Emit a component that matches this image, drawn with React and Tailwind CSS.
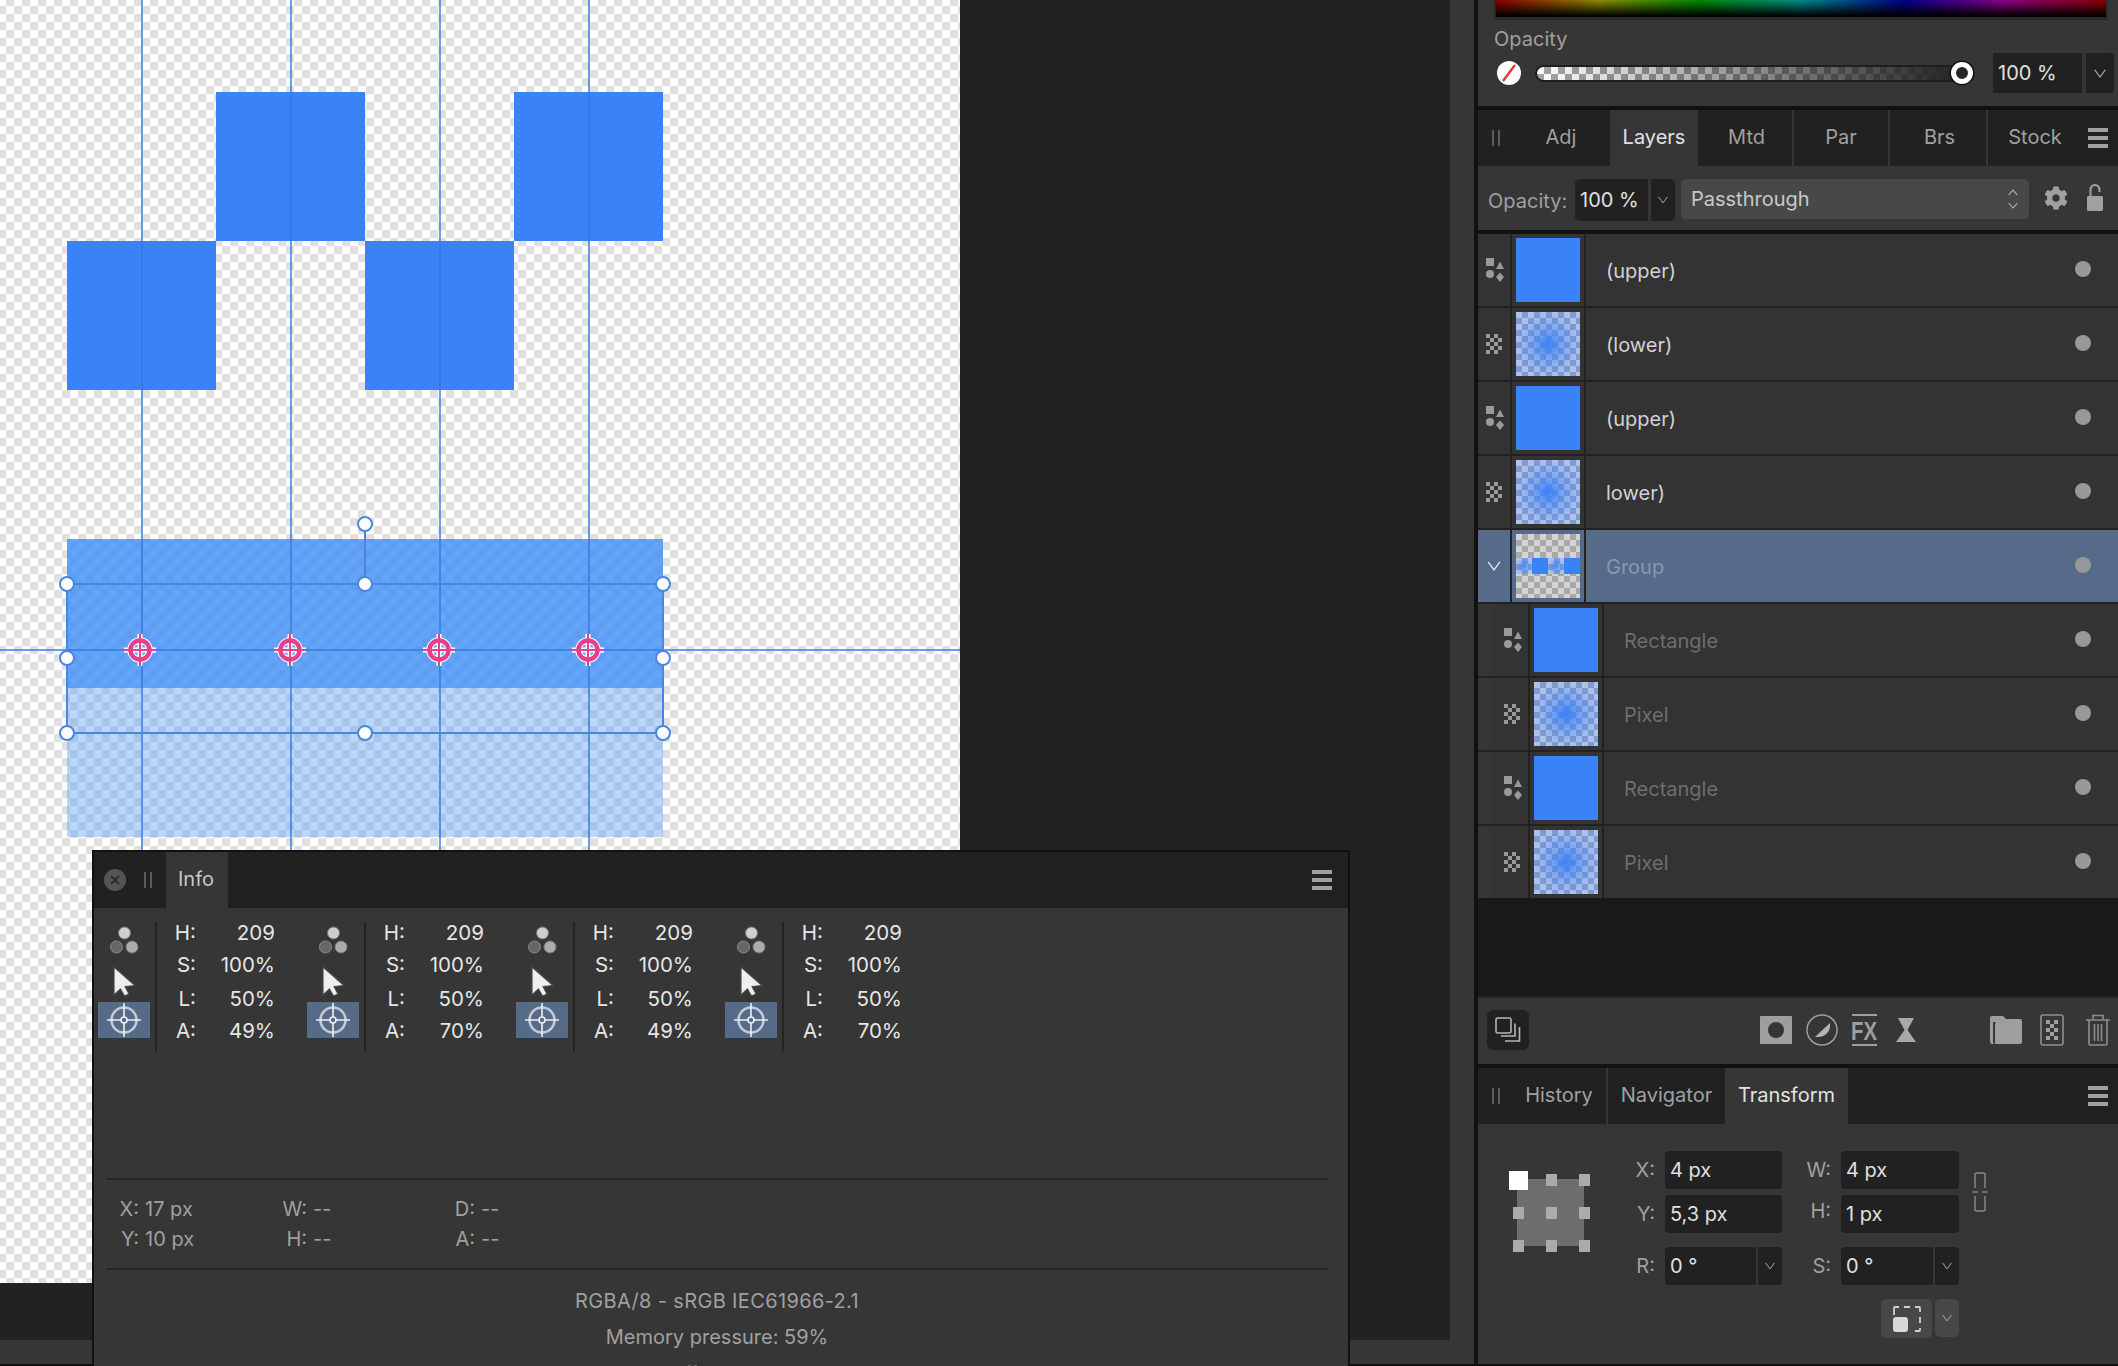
import React from "react";
import { FaCog } from "react-icons/fa";

const CHECK = "bg-[conic-gradient(#e0e0e0_25%,#ffffff_0_50%,#e0e0e0_0_75%,#ffffff_0)] bg-[length:16px_16px] bg-[position:-2px_-2px]";
const PIXEL_THUMB = "bg-[radial-gradient(circle,#3b82f6_0%,rgba(59,130,246,0.4)_35%,rgba(59,130,246,0)_72%),conic-gradient(#7f9bd3_25%,#b0c2e8_0_50%,#7f9bd3_0_75%,#b0c2e8_0)] bg-[length:100%_100%,12px_12px]";

const Chevron = ({ color = "#a8a8a8", w = 12, h = 9 }) => (
  <svg width={w} height={h} viewBox="0 0 12 9" fill="none" stroke={color} strokeWidth="1.2"><path d="M0.7 0.8 L6 8 L11.3 0.8" /></svg>
);

const Burger = () => (
  <div className="flex flex-col gap-[4px] w-[20px]">
    <div className="h-[4px] bg-[#a0a0a0]" />
    <div className="h-[4px] bg-[#a0a0a0]" />
    <div className="h-[4px] bg-[#a0a0a0]" />
  </div>
);

const Grip = () => (
  <div className="flex gap-[4px]">
    <div className="w-[2px] h-[16px] bg-[#5a5a5a]" />
    <div className="w-[2px] h-[16px] bg-[#5a5a5a]" />
  </div>
);

const Handle = ({ x, y }) => (
  <div className={`absolute w-[16px] h-[16px] rounded-full bg-white border-2 border-[#4a86e0] -translate-x-1/2 -translate-y-1/2 ${x} ${y}`} />
);

const Target = ({ x }) => (
  <svg className={`absolute top-[633px] ${x}`} width="34" height="34" viewBox="0 0 34 34" fill="none">
    <circle cx="17" cy="17" r="9.5" stroke="#fff" strokeWidth="6.5" />
    <path d="M17 1V33M1 17H33" stroke="#fff" strokeWidth="5" />
    <circle cx="17" cy="17" r="9.5" stroke="#e83e8c" strokeWidth="4.5" />
    <path d="M17 1V33M1 17H33" stroke="#e83e8c" strokeWidth="2" />
  </svg>
);

const Canvas = () => (
  <div className={`relative w-[960px] h-[1283px] ${CHECK}`}>
    <div className="absolute left-[216px] top-[92px] w-[149px] h-[149px] bg-[#3a82f7]" />
    <div className="absolute left-[514px] top-[92px] w-[149px] h-[149px] bg-[#3a82f7]" />
    <div className="absolute left-[67px] top-[241px] w-[149px] h-[149px] bg-[#3a82f7]" />
    <div className="absolute left-[365px] top-[241px] w-[149px] h-[149px] bg-[#3a82f7]" />
    <div className="absolute left-[67px] top-[539px] w-[596px] h-[149px] bg-[rgba(60,140,246,0.8)]" />
    <div className="absolute left-[67px] top-[688px] w-[596px] h-[149px] bg-[rgba(88,157,245,0.42)]" />

    <div className="absolute left-[141px] top-0 w-[2px] h-[850px] bg-[rgba(50,120,225,0.72)]" />
    <div className="absolute left-[290px] top-0 w-[2px] h-[850px] bg-[rgba(50,120,225,0.72)]" />
    <div className="absolute left-[439px] top-0 w-[2px] h-[850px] bg-[rgba(50,120,225,0.72)]" />
    <div className="absolute left-[588px] top-0 w-[2px] h-[850px] bg-[rgba(50,120,225,0.72)]" />
    <div className="absolute left-0 top-[649px] w-[960px] h-[2px] bg-[rgba(50,120,225,0.72)]" />

    <Target x="left-[123px]" />
    <Target x="left-[273px]" />
    <Target x="left-[422px]" />
    <Target x="left-[571px]" />

    <div className="absolute left-[66px] top-[583px] w-[598px] h-[151px] border-2 border-[#4a86e0]" />
    <div className="absolute left-[364px] top-[524px] w-[2px] h-[60px] bg-[#4a86e0]" />
    <Handle x="left-[365px]" y="top-[524px]" />
    <Handle x="left-[67px]" y="top-[584px]" />
    <Handle x="left-[365px]" y="top-[584px]" />
    <Handle x="left-[663px]" y="top-[584px]" />
    <Handle x="left-[67px]" y="top-[658px]" />
    <Handle x="left-[663px]" y="top-[658px]" />
    <Handle x="left-[67px]" y="top-[733px]" />
    <Handle x="left-[365px]" y="top-[733px]" />
    <Handle x="left-[663px]" y="top-[733px]" />
  </div>
);

const ThreeDots = () => (
  <svg width="30" height="28" viewBox="0 0 30 28">
    <circle cx="15.5" cy="7" r="6" fill="#cfcfcf" stroke="#7a7a7a" strokeWidth="1" />
    <circle cx="7.5" cy="21" r="6" fill="#666" stroke="#8a8a8a" strokeWidth="1" />
    <circle cx="23" cy="21" r="6" fill="#acacac" stroke="#7a7a7a" strokeWidth="1" />
  </svg>
);

const Arrow = () => (
  <svg width="24" height="31" viewBox="0 0 24 31">
    <path d="M1 1V29L7.5 23L11.5 30L16 28L12 20.5L22 19.5Z" fill="#efefef" stroke="#4a4a4a" strokeWidth="1.2" strokeLinejoin="round" />
  </svg>
);

const Crosshair = () => (
  <svg width="34" height="34" viewBox="0 0 34 34" fill="none">
    <circle cx="17" cy="17" r="12.5" stroke="#c3cad4" strokeWidth="2.6" />
    <path d="M17 0V14M17 20V34M0 17H14M20 17H34" stroke="#f0f0f0" strokeWidth="1.6" />
    <circle cx="17" cy="17" r="3" stroke="#f0f0f0" strokeWidth="1.6" />
  </svg>
);

const InfoColumn = ({ a }) => (
  <div className="flex w-[209px] shrink-0 h-[130px]">
    <div className="w-[52px] flex flex-col items-center">
      <div className="h-[44px] pt-[4px]"><ThreeDots /></div>
      <div className="h-[36px] flex items-start pl-[2px]"><Arrow /></div>
      <div className="w-[52px] h-[36px] bg-[#566b8a] flex items-center justify-center"><Crosshair /></div>
    </div>
    <div className="ml-[5px] w-[2px] h-[130px] bg-[#242424]" />
    <div className="grid grid-cols-[39px_79px] gap-y-[10px] h-fit text-[20.5px] leading-[22px] text-[#e6e6e6]">
      <span className="text-right">H:</span><span className="text-right">209</span>
      <span className="text-right">S:</span><span className="text-right">100%</span>
      <span className="text-right mt-[2px]">L:</span><span className="text-right mt-[2px]">50%</span>
      <span className="text-right">A:</span><span className="text-right">{a}</span>
    </div>
  </div>
);

const Measure = ({ rows }) => (
  <div className="flex flex-col">
    {rows.map(([l, v], i) => (
      <div key={i} className="flex h-[30px] items-center">
        <span className="w-[33px] text-right">{l}</span>
        <span className="ml-[6px] w-[129px]">{v}</span>
      </div>
    ))}
  </div>
);

const InfoPanel = () => (
  <div className="absolute left-[92px] top-[850px] w-[1258px] h-[516px] border-x-2 border-t-2 border-[#111] bg-[#363636] overflow-hidden">
    <div className="h-[56px] bg-[#212121] flex items-center">
      <div className="ml-[10px] w-[22px] h-[22px] rounded-full bg-[#555] flex items-center justify-center">
        <svg width="12" height="12" viewBox="0 0 12 12" stroke="#2a2a2a" strokeWidth="2"><path d="M2 2L10 10M10 2L2 10" /></svg>
      </div>
      <div className="ml-[18px]"><Grip /></div>
      <div className="ml-[14px] w-[62px] h-full bg-[#363636] flex items-center justify-center pb-[2px] pr-[2px] text-[#c8c8c8] text-[20px]">Info</div>
      <div className="ml-auto mr-[16px]"><Burger /></div>
    </div>
    <div className="pt-[14px] pl-[4px] flex">
      <InfoColumn a="49%" />
      <InfoColumn a="70%" />
      <InfoColumn a="49%" />
      <InfoColumn a="70%" />
    </div>
    <div className="ml-[12px] mr-[20px] mt-[126px] text-[20px] text-[#a0a0a0]">
      <div className="h-[2px] bg-[#272727]" />
      <div className="flex pt-[14px] h-[88px]">
        <Measure rows={[["X:", "17 px"], ["Y:", "10 px"]]} />
        <Measure rows={[["W:", "--"], ["H:", "--"]]} />
        <Measure rows={[["D:", "--"], ["A:", "--"]]} />
      </div>
      <div className="h-[2px] bg-[#272727]" />
      <div className="text-center pt-[13px]">
        <div className="leading-[36px] tracking-[0.35px]">RGBA/8 - sRGB IEC61966-2.1</div>
        <div className="leading-[37px]">Memory pressure: 59%</div>
        <div className="leading-[37px]">Memory efficiency: 100.0%</div>
      </div>
    </div>
  </div>
);

const TabBar = ({ tabs, active }) => (
  <div className="h-[56px] bg-[#212121] flex items-stretch relative shrink-0 text-[20px] text-[#a0a0a0]">
    <div className="pl-[14px] flex items-center"><Grip /></div>
    {tabs.map(([t, w], i) => (
      <div
        key={t}
        className={`flex items-center justify-center pb-[2px] ${w} ${i === 0 ? "pl-[12px]" : ""} ${t === active ? "bg-[#363636] text-[#e2e2e2]" : i < tabs.length - 1 && tabs[i + 1][0] !== active ? "border-r-2 border-[#363636]" : ""}`}
      >
        {t}
      </div>
    ))}
    <div className="ml-auto mr-[10px] flex items-center"><Burger /></div>
  </div>
);

const ShapeIcon = () => (
  <svg width="18" height="24" viewBox="0 0 18 24" fill="#9a9a9a">
    <rect x="0" y="0" width="8" height="8" />
    <path d="M14 3.5L18 11H10Z" />
    <circle cx="4" cy="16" r="4" />
    <path d="M14 14.5L18 19L14 24L10 19Z" />
  </svg>
);

const PixelIcon = () => (
  <svg width="16" height="20" viewBox="0 0 16 20" fill="#9a9a9a">
    <rect x="0" y="0" width="4" height="4" /><rect x="8" y="0" width="4" height="4" />
    <rect x="4" y="4" width="4" height="4" /><rect x="12" y="4" width="4" height="4" />
    <rect x="0" y="8" width="4" height="4" /><rect x="8" y="8" width="4" height="4" />
    <rect x="4" y="12" width="4" height="4" /><rect x="12" y="12" width="4" height="4" />
    <rect x="0" y="16" width="4" height="4" /><rect x="8" y="16" width="4" height="4" />
  </svg>
);

const Dot = () => <div className="ml-auto mr-[27px] mb-[3px] w-[16px] h-[16px] rounded-full bg-[#989898]" />;

const LayerRow = ({ kind, name, text, child }) => (
  <div className="h-[72px] bg-[#333] flex items-stretch">
    {child && <div className="w-[16px] bg-[#363636] mr-[2px]" />}
    <div className="flex items-center w-[32px] pl-[8px]">
      {kind === "shape" ? <ShapeIcon /> : <PixelIcon />}
    </div>
    <div className="w-[2px] bg-[#222]" />
    <div className="w-[72px] flex items-center justify-center">
      {kind === "shape" ? (
        <div className="w-[64px] h-[64px] bg-[#3a82f7]" />
      ) : (
        <div className={`w-[64px] h-[64px] ${PIXEL_THUMB}`} />
      )}
    </div>
    <div className="w-[2px] bg-[#222]" />
    <div className={`flex items-center flex-1 text-[20px] pl-[20px] ${text}`}>
      <span className="pt-[2px]">{name}</span>
      <Dot />
    </div>
  </div>
);

const GroupRow = () => (
  <div className="h-[72px] bg-[#566b8a] flex items-stretch">
    <div className="w-[32px] flex items-center justify-center"><Chevron color="#e8e8e8" w={14} h={10} /></div>
    <div className="w-[2px] bg-[#222]" />
    <div className="w-[72px] flex items-center justify-center">
      <div className="w-[64px] h-[64px] flex items-center bg-[conic-gradient(#a8a8a8_25%,#d4d4d4_0_50%,#a8a8a8_0_75%,#d4d4d4_0)] bg-[length:12px_12px]">
        <div className={`w-[16px] h-[16px] ${PIXEL_THUMB}`} />
        <div className="w-[16px] h-[16px] bg-[#3a82f7]" />
        <div className={`w-[16px] h-[16px] ${PIXEL_THUMB}`} />
        <div className="w-[16px] h-[16px] bg-[#3a82f7]" />
      </div>
    </div>
    <div className="w-[2px] bg-[#222]" />
    <div className="flex items-center flex-1 text-[20px] pl-[20px] text-[#8b98aa]">
      <span className="pt-[2px]">Group</span>
      <Dot />
    </div>
  </div>
);

const OpacitySection = () => (
  <div className="h-[106px] bg-[#363636] pl-[16px] shrink-0">
    <div className="h-[20px] w-[614px] bg-[#2a2a2a] px-[2px]">
      <div className="h-[17px] bg-[linear-gradient(to_bottom,rgba(0,0,0,0.45),#000_95%),linear-gradient(to_right,#f00,#ff0_17%,#0f0_33%,#0ff_50%,#00f_67%,#f0f_83%,#f00)]" />
    </div>
    <div className="h-[33px] pt-[5px] leading-[28px] text-[20px] text-[#a0a0a0]">Opacity</div>
    <div className="flex items-center h-[40px]">
      <svg className="ml-[3px] shrink-0" width="24" height="24" viewBox="0 0 24 24">
        <circle cx="12" cy="12" r="12" fill="#fff" />
        <path d="M6 20L18 4" stroke="#e03a30" strokeWidth="2.4" />
      </svg>
      <div className="relative ml-[14px] w-[437px] h-[17px] shrink-0 rounded-full bg-[#1e1e1e] p-[2px]">
        <div className="h-[13px] rounded-full bg-[linear-gradient(to_right,rgba(38,38,38,0),#262626_96%),conic-gradient(#a4a4a4_25%,#ffffff_0_50%,#a4a4a4_0_75%,#ffffff_0)] bg-[length:100%_100%,14px_14px]" />
        <div className="absolute left-[416px] top-[-3px] w-[22px] h-[22px] rounded-full border-[5px] border-white bg-[#262626] shadow-[0_0_0_1.5px_#111]" />
      </div>
      <div className="ml-[21px] w-[89px] h-[40px] shrink-0 bg-[#212121] flex items-center pl-[5px] text-[20px] text-[#e0e0e0]">100 %</div>
      <div className="ml-[4px] w-[28px] h-[40px] shrink-0 bg-[#212121] rounded-r-[3px] flex items-center justify-center"><Chevron /></div>
    </div>
  </div>
);

const LayersToolbar = () => (
  <div className="h-[64px] bg-[#363636] flex items-start pt-[13px] shrink-0">
    <div className="pl-[10px] pt-[2px] w-[97px] h-[42px] flex items-center text-[20px] text-[#a0a0a0]">Opacity:</div>
    <div className="w-[73px] h-[42px] bg-[#212121] rounded-l-[5px] flex items-center pl-[5px] text-[20px] text-[#e0e0e0]">100 %</div>
    <div className="ml-[3px] w-[24px] h-[42px] bg-[#212121] rounded-r-[5px] flex items-center justify-center"><Chevron w={10} h={8} /></div>
    <div className="ml-[6px] w-[348px] h-[40px] bg-[#484848] rounded-[5px] flex items-center pl-[10px] text-[20px] text-[#c8c8c8]">
      <span className="pb-[1px]">Passthrough</span>
      <svg className="ml-auto mr-[11px]" width="10" height="20" viewBox="0 0 10 20" fill="none" stroke="#bdbdbd" strokeWidth="1.1">
        <path d="M0.7 6L5 1L9.3 6M0.7 14L5 19L9.3 14" />
      </svg>
    </div>
    <div className="ml-[15px] mt-[7px] text-[#a0a0a0] text-[24px]"><FaCog /></div>
    <svg className="ml-[19px] mt-[5px]" width="16" height="27" viewBox="0 0 16 27" fill="none">
      <path d="M3.5 12V6.5C3.5 3 5.3 1 8 1S12.5 3 12.5 6.5V8" stroke="#a0a0a0" strokeWidth="2" />
      <rect x="0" y="12" width="16" height="15" rx="1.5" fill="#a0a0a0" />
    </svg>
  </div>
);

const ActionBar = () => (
  <div className="h-[66px] bg-[#363636] flex items-center pl-[9px] pb-[2px] shrink-0">
    <div className="w-[42px] h-[40px] bg-[#212121] rounded-[6px] flex items-center justify-center">
      <svg width="26" height="26" viewBox="0 0 26 26" fill="none" stroke="#b5b5b5" strokeWidth="1.6">
        <rect x="1" y="1" width="15" height="15" rx="2" />
        <path d="M20 6.5V19H6" /><path d="M24.5 10V24H10" />
      </svg>
    </div>
    <svg className="ml-[231px]" width="32" height="28" viewBox="0 0 32 28">
      <path fillRule="evenodd" fill="#9e9e9e" d="M1 0H31a1 1 0 0 1 1 1V27a1 1 0 0 1-1 1H1a1 1 0 0 1-1-1V1a1 1 0 0 1 1-1ZM16 6a8 8 0 1 0 0 16a8 8 0 1 0 0-16Z" />
    </svg>
    <svg className="ml-[14px]" width="32" height="32" viewBox="0 0 32 32">
      <circle cx="16" cy="16" r="15" fill="none" stroke="#9e9e9e" strokeWidth="1.5" />
      <path d="M24 9C25 17 20 24 9 23Z" fill="#b5b5b5" />
    </svg>
    <svg className="ml-[14px]" width="25" height="32" viewBox="0 0 25 32">
      <rect x="0" y="0" width="25" height="2" fill="#9e9e9e" />
      <rect x="0" y="30" width="25" height="2" fill="#9e9e9e" />
      <text x="-1" y="25.5" fontFamily="Liberation Sans, sans-serif" fontWeight="700" fontSize="25" fill="#9e9e9e" textLength="26" lengthAdjust="spacingAndGlyphs">FX</text>
    </svg>
    <svg className="ml-[19px]" width="20" height="24" viewBox="0 0 20 24" fill="#a8a8a8">
      <path d="M2 0H18L11.5 12L20 24H0L8.5 12Z" />
    </svg>
    <svg className="ml-[74px]" width="32" height="28" viewBox="0 0 32 28" fill="#9e9e9e">
      <path d="M2 0H13L16 3H30a2 2 0 0 1 2 2V26a2 2 0 0 1-2 2H6C5 28 5 27 5 26V8a2 2 0 0 1 2-2H3V26a2 2 0 0 0 2 2H2a2 2 0 0 1-2-2V2a2 2 0 0 1 2-2Z" />
    </svg>
    <svg className="ml-[18px]" width="24" height="32" viewBox="0 0 24 32">
      <rect x="1" y="1" width="22" height="30" rx="2" fill="none" stroke="#8e8e8e" strokeWidth="1.6" />
      <g fill="#9e9e9e">
        <rect x="6" y="6" width="4" height="4" /><rect x="14" y="6" width="4" height="4" />
        <rect x="10" y="10" width="4" height="4" />
        <rect x="6" y="14" width="4" height="4" /><rect x="14" y="14" width="4" height="4" />
        <rect x="10" y="18" width="4" height="4" />
        <rect x="6" y="22" width="4" height="4" /><rect x="14" y="22" width="4" height="4" />
      </g>
    </svg>
    <svg className="ml-[22px]" width="24" height="32" viewBox="0 0 24 32" fill="none" stroke="#8e8e8e" strokeWidth="1.6">
      <path d="M0 6H24M7 5V1.5H17V5M3 6V30a1 1 0 0 0 1 1H20a1 1 0 0 0 1-1V6M8.5 10V27M12 10V27M15.5 10V27" />
    </svg>
  </div>
);

const Field = ({ children, w }) => (
  <div className={`${w} h-[38px] bg-[#212121] rounded-[4px] flex items-center pl-[5px] text-[20px] text-[#e0e0e0]`}>{children}</div>
);

const DropField = ({ children, w }) => (
  <div className="flex">
    <div className={`${w} h-[38px] bg-[#212121] rounded-l-[4px] flex items-center pl-[5px] text-[20px] text-[#e0e0e0]`}>{children}</div>
    <div className="ml-[2px] w-[24px] h-[38px] bg-[#212121] rounded-r-[4px] flex items-center justify-center"><Chevron w={10} h={8} /></div>
  </div>
);

const Label = ({ children, w, extra = "" }) => (
  <div className={`${w} pr-[10px] text-right text-[20px] text-[#a0a0a0] h-[38px] leading-[38px] ${extra}`}>{children}</div>
);

const TransformPanel = () => (
  <div className="flex-1 bg-[#363636] flex pt-[20px]">
    <div className="relative ml-[27px] mt-[27px] w-[105px] h-[85px]">
      <div className="absolute left-[12px] top-[8px] w-[67px] h-[67px] bg-[#6e6e6e]" />
      {[["left-[41px]", "top-[3px]"], ["left-[74px]", "top-[3px]"], ["left-[8px]", "top-[36px]"], ["left-[41px]", "top-[36px]"], ["left-[74px]", "top-[36px]"], ["left-[8px]", "top-[69px]"], ["left-[41px]", "top-[69px]"], ["left-[74px]", "top-[69px]"]].map(([l, t], i) => (
        <div key={i} className={`absolute w-[11px] h-[12px] bg-[#ababab] ${l} ${t}`} />
      ))}
      <div className="absolute left-[4px] top-0 w-[19px] h-[19px] bg-white" />
    </div>
    <div className="relative flex flex-col pt-[7px]">
      <div className="flex">
        <Label w="w-[55px]">X:</Label>
        <Field w="w-[117px]">4 px</Field>
        <Label w="w-[59px]">W:</Label>
        <Field w="w-[118px]">4 px</Field>
      </div>
      <div className="flex mt-[6px]">
        <Label w="w-[55px]">Y:</Label>
        <Field w="w-[117px]">5,3 px</Field>
        <Label w="w-[59px]" extra="-translate-y-[3px]">H:</Label>
        <Field w="w-[118px]">1 px</Field>
      </div>
      <div className="flex mt-[14px]">
        <Label w="w-[55px]">R:</Label>
        <DropField w="w-[91px]">0 °</DropField>
        <Label w="w-[59px]">S:</Label>
        <DropField w="w-[92px]">0 °</DropField>
      </div>
      <div className="flex mt-[14px] ml-[271px]">
        <div className="w-[51px] h-[39px] bg-[#484848] rounded-[5px] flex items-center justify-center">
          <svg width="28" height="26" viewBox="0 0 28 26" fill="none">
            <path d="M1 9V2a1 1 0 0 1 1-1H6M11 1H17M22 1H26a1 1 0 0 1 1 1V6M27 11V17M27 22V24a1 1 0 0 1-1 1H22" stroke="#d0d0d0" strokeWidth="1.8" />
            <rect x="0" y="11" width="15" height="15" rx="3" fill="#d8d8d8" />
          </svg>
        </div>
        <div className="ml-[3px] w-[24px] h-[38px] bg-[#484848] rounded-[5px] flex items-center justify-center"><Chevron w={10} h={8} /></div>
      </div>
      <svg className="absolute left-[362px] top-[28px]" width="16" height="40" viewBox="0 0 16 40" fill="none" stroke="#8a8a8a" strokeWidth="1.4">
        <path d="M3 16V3a2 2 0 0 1 2-2H11a2 2 0 0 1 2 2V16M3 24V37a2 2 0 0 0 2 2H11a2 2 0 0 0 2-2V24M0 20H6M10 20H16" />
      </svg>
    </div>
  </div>
);

export default function App() {
  const layers = [
    { kind: "shape", name: "(upper)" },
    { kind: "pixel", name: "(lower)" },
    { kind: "shape", name: "(upper)" },
    { kind: "pixel", name: "lower)" },
  ];
  const children = [
    { kind: "shape", name: "Rectangle" },
    { kind: "pixel", name: "Pixel" },
    { kind: "shape", name: "Rectangle" },
    { kind: "pixel", name: "Pixel" },
  ];
  return (
    <div className="relative flex w-[2118px] h-[1366px] overflow-hidden bg-[#111] font-['Inter',sans-serif]">
      <div className="w-[1474px] flex flex-col">
        <div className="flex h-[1340px]">
          <div className="flex-1 bg-[#222]"><Canvas /></div>
          <div className="w-[24px] bg-[#363636]" />
        </div>
        <div className="h-[24px] bg-[#363636]" />
      </div>
      <div className="ml-[4px] w-[640px] flex flex-col">
        <OpacitySection />
        <div className="h-[4px] shrink-0" />
        <TabBar tabs={[["Adj", "w-[110px]"], ["Layers", "w-[88px]"], ["Mtd", "w-[96px] pl-[3px]"], ["Par", "w-[96px]"], ["Brs", "w-[98px] pl-[3px]"], ["Stock", "w-[94px]"]]} active="Layers" />
        <LayersToolbar />
        <div className="h-[4px] shrink-0" />
        <div className="flex flex-col gap-[2px] bg-[#222] shrink-0">
          {layers.map((l, i) => <LayerRow key={i} {...l} text="text-[#d2d2d2]" />)}
          <GroupRow />
          {children.map((l, i) => <LayerRow key={i} {...l} child text="text-[#6e6e6e]" />)}
        </div>
        <div className="h-[98px] bg-[#191919] shrink-0" />
        <div className="h-[2px] bg-[#262626] shrink-0" />
        <ActionBar />
        <div className="h-[4px] shrink-0" />
        <TabBar tabs={[["History", "w-[108px]"], ["Navigator", "w-[117px]"], ["Transform", "w-[123px]"]]} active="Transform" />
        <TransformPanel />
        <div className="h-[2px] shrink-0" />
      </div>
      <InfoPanel />
    </div>
  );
}
